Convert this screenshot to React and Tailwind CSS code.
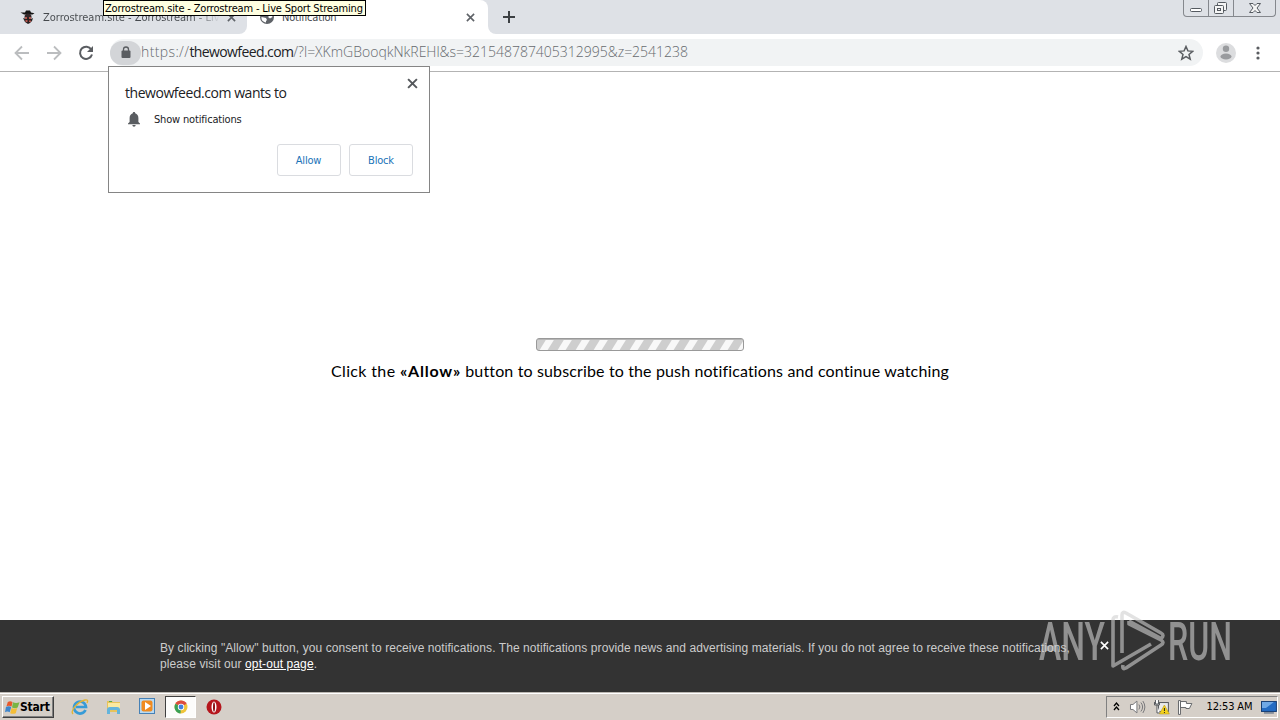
import React from "react";

const TabClose = ({ className }) => (
    <svg viewBox="0 0 10 10" className={className} fill="none" stroke="currentColor" strokeWidth="1.8">
        <path d="M1 1l8 8M9 1L1 9" />
    </svg>
);

function TabStrip() {
    return (
        <div className="flex h-[34px] shrink-0 bg-[#dee1e6] text-[11px] text-[#45494d]">
            <div className="flex w-[247px] bg-white">
                <div className="flex w-full items-center rounded-br-lg bg-[#dee1e6] pl-5">
                    <svg viewBox="0 0 16 16" className="h-4 w-4 shrink-0">
                        <path d="M0.500 3.500l4.500 0L6 1.500h4l1 2 3.500.8-2 1.200L4 5.500z" fill="#151515" />
                        <circle cx="8" cy="8" r="3.500" fill="#33282a" />
                        <path d="M3 9l3 1 2-1 3 1 2-1-1 3-2 2-2 1-3-2-1-2z" fill="#292020" />
                        <path d="M5 8h2v2H5zM9 8h2v2H9zM5.500 11h2v2h-2zM9 11.500h2v1.500H9z" fill="#b5554e" />
                    </svg>
                    <span className="ml-[7px] mt-[2px] w-[177px] overflow-hidden whitespace-nowrap bg-gradient-to-r from-[#45494d] from-85% to-transparent bg-clip-text tracking-[-0.02px] text-transparent">
                        Zorrostream.site - Zorrostream - Live
                    </span>
                    <TabClose className="ml-[7px] h-[9px] w-[9px] text-[#5f6368]" />
                </div>
            </div>
            <div className="flex w-[241px] bg-[#dee1e6]">
                <div className="flex w-full items-center rounded-tr-lg bg-white pl-3">
                    <svg viewBox="0 0 16 16" className="h-4 w-4 shrink-0">
                        <circle cx="8" cy="8" r="7" fill="#5f6368" />
                        <path d="M2.500 8l4.500 1 1 2-1 1v1.500C4 13 2 11 2.500 8zM9 2.500l3 1.500 1.500 4-2.500 1.500-2-1.500 1-1-2-2z" fill="#fff" />
                    </svg>
                    <span className="ml-[7px] mt-[2px] w-[184px] tracking-[-0.2px]">Notification</span>
                    <TabClose className="h-[9px] w-[9px] text-[#5f6368]" />
                </div>
            </div>
            <div className="flex flex-1 bg-white">
                <div className="flex flex-1 items-center justify-between rounded-bl-lg bg-[#dee1e6] pl-[15px] pr-1">
                    <svg viewBox="0 0 12 12" className="h-3 w-3" stroke="#3c4043" strokeWidth="2">
                        <path d="M6 0v12M0 6h12" />
                    </svg>
                    <div className="flex h-[17px] w-[93px] self-start rounded-b-[4px] border border-t-0 border-[#85888d]">
                        <div className="w-[25px] border-r border-[#85888d]">
                            <svg viewBox="0 0 25 16" className="h-4 w-[25px]">
                                <rect x="6.500" y="8.500" width="11" height="3" rx="1" fill="#fff" stroke="#555a60" />
                            </svg>
                        </div>
                        <div className="w-[25px] border-r border-[#85888d]">
                            <svg viewBox="0 0 25 16" className="h-4 w-[25px]" fill="#f5f5f5" stroke="#555a60">
                                <rect x="8.500" y="2.500" width="9" height="8" rx="1" />
                                <rect x="5.500" y="5.500" width="9" height="8" rx="1" />
                                <rect x="8.500" y="8.500" width="3" height="2" />
                            </svg>
                        </div>
                        <svg viewBox="0 0 41 16" className="h-4 w-[41px]">
                            <path
                                d="M15.500 3.500h3.500l2 2 2-2h3.500l-3.500 4.500 3.500 4.500H23l-2-2-2 2h-3.500L19 8z"
                                fill="#f5f5f5"
                                stroke="#555a60"
                            />
                        </svg>
                    </div>
                </div>
            </div>
        </div>
    );
}

function Toolbar() {
    return (
        <div className="flex h-[38px] shrink-0 items-center border-b border-[#b3b3b3] bg-white pl-[14px]">
            <svg viewBox="0 0 16 16" className="h-4 w-4" fill="none" stroke="#bbbdbf" strokeWidth="1.8">
                <path d="M15 8H2M8 1.500L1.500 8 8 14.500" />
            </svg>
            <svg viewBox="0 0 16 16" className="ml-4 h-4 w-4" fill="none" stroke="#bbbdbf" strokeWidth="1.8">
                <path d="M1 8h13M8 1.500L14.500 8 8 14.500" />
            </svg>
            <svg viewBox="0 0 16 16" className="ml-4 h-4 w-4">
                <path d="M13.300 4.500A6.100 6.100 0 1 0 14 9.500" fill="none" stroke="#5a5d61" strokeWidth="2" />
                <path d="M15 1v6H9z" fill="#5a5d61" />
            </svg>
            <div className="ml-[16px] flex h-[27px] w-[1093px] items-center rounded-full bg-[#f1f3f4]">
                <div className="flex h-6 w-[31px] items-center justify-center rounded-full bg-[#d3d5d8]">
                    <svg viewBox="0 0 10 13" className="h-[13px] w-[10px]">
                        <path d="M2.500 6V3.500a2.500 2.500 0 0 1 5 0V6" fill="none" stroke="#5a5d61" strokeWidth="1.300" />
                        <rect x="0.500" y="4.500" width="9" height="7.500" rx="1" fill="#5a5d61" />
                    </svg>
                </div>
                <div className="mb-[2px] flex-1 whitespace-nowrap font-['Open_Sans','Noto_Sans',sans-serif] text-[14px] font-light text-[#666a6e]">
                    <span className="tracking-[0.38px]">https://</span>
                    <span className="tracking-[-0.6px] font-normal text-[#202124]">thewowfeed.com</span>
                    <span className="tracking-[-0.01px]">/?l=XKmGBooqkNkREHl&amp;s=321548787405312995&amp;z=2541238</span>
                </div>
                <svg viewBox="0 0 16 16" className="mr-[9px] h-4 w-4" fill="none" stroke="#5a5d61" strokeWidth="1.500">
                    <path d="M8 1.500l1.900 4.400 4.800.4-3.700 3.100 1.200 4.700L8 11.600l-4.200 2.500L5 9.400 1.300 6.300l4.800-.4z" />
                </svg>
            </div>
            <svg viewBox="0 0 20 20" className="ml-[13px] h-5 w-5">
                <circle cx="10" cy="10" r="10" fill="#dcdddf" />
                <circle cx="10" cy="5.800" r="3.200" fill="#999b9e" />
                <ellipse cx="10" cy="13.500" rx="5.500" ry="3" fill="#999b9e" />
            </svg>
            <svg viewBox="0 0 4 14" className="ml-5 h-[14px] w-1" fill="#5a5d61">
                <circle cx="2" cy="2" r="1.600" />
                <circle cx="2" cy="7" r="1.600" />
                <circle cx="2" cy="12" r="1.600" />
            </svg>
        </div>
    );
}

function PermissionPopup() {
    return (
        <div className="absolute left-[108px] top-[66px] flex h-[127px] w-[322px] flex-col border border-[#858585] bg-white pl-4 pr-4">
            <div className="flex h-[39px] items-end justify-between">
                <p className="mb-[3px] whitespace-nowrap font-['Open_Sans','Noto_Sans',sans-serif] text-[14px] leading-5 tracking-[-0.45px] text-[#202124]">
                    thewowfeed.com wants to
                </p>
                <TabClose className="-mr-[5px] mb-[17px] h-[11px] w-[11px] text-[#55585c]" />
            </div>
            <div className="mt-[5px] flex h-4 items-center">
                <svg viewBox="0 0 12 15" className="ml-[3px] h-[15px] w-3" fill="#5a5d61">
                    <path d="M6 0c.8 0 1.200.5 1.200 1.300C9.200 1.900 10.400 3.500 10.400 6v4L12 11.500v.8H0v-.8L1.600 10V6c0-2.500 1.200-4.100 3.200-4.700C4.800.5 5.200 0 6 0zM4.400 13h3.200c0 1-.6 1.700-1.600 1.700S4.400 14 4.400 13z" />
                </svg>
                <span className="ml-[14px] mt-[2px] text-[11px] tracking-[-0.17px] text-[#202124]">Show notifications</span>
            </div>
            <div className="mt-[17px] flex justify-end gap-2 text-[11px] tracking-[-0.2px] text-[#1a73b8]">
                <button className="h-8 w-16 rounded-[3px] border border-[#dadce0] pr-px pt-[2px]">Allow</button>
                <button className="h-8 w-16 rounded-[3px] border border-[#dadce0] pt-[2px]">Block</button>
            </div>
        </div>
    );
}

function Watermark() {
    return (
        <svg viewBox="0 0 196 66" className="absolute left-[1037px] top-[607px] h-[66px] w-[196px] opacity-60">
            <g fill="#d0d0d0" fontFamily="Roboto, sans-serif" fontSize="53" fontWeight="500">
                <text x="2" y="52.500" textLength="66" lengthAdjust="spacingAndGlyphs">ANY</text>
                <text x="131" y="52.500" textLength="64" lengthAdjust="spacingAndGlyphs">RUN</text>
            </g>
            <path
                d="M81 10q-5-1-5 3v46l38-22M85 46V8q0-4 4-2l35 20q4 2 0 5.500L92 14M92 14v3l32 16q4 2.500 0 5L89 61q-4 2-3-3"
                fill="none"
                stroke="#d0d0d0"
                strokeWidth="3.600"
                strokeLinejoin="round"
            />
        </svg>
    );
}

function Taskbar() {
    return (
        <div className="flex h-[28px] shrink-0 items-center border-t border-[#bdb9b3] bg-[#d5cfc8] pl-[2px] pr-[2px] shadow-[inset_0_1px_0_#fff]">
            <div className="mt-px flex h-[22px] w-[52px] items-center border border-b-[#404040] border-l-white border-r-[#404040] border-t-white pl-[2px] text-[12px] font-bold text-black shadow-[inset_-1px_-1px_0_#808080]">
                <svg viewBox="0 0 16 16" className="h-[15px] w-[15px] shrink-0">
                    <path d="M3 2c2-1 3-1 5 0L7 7C5 6 3 6 1.500 7z" fill="#e9582b" />
                    <path d="M8.500 2.500c2 1 4.500 1 7 0l-2 5.500c-2 1-4 1-6 0z" fill="#79b544" />
                    <path d="M1 7.500c2-1 4-1 5.700 0L5 13c-1.500-1-3.500-1-5 0z" fill="#3f86cc" />
                    <path d="M7 8.500c2 1 4 1 6 0l-1.500 5.500c-2 1-4 1-6 0z" fill="#f4bd36" />
                </svg>
                <span className="tracking-[-0.2px]">Start</span>
            </div>
            <svg viewBox="0 0 18 18" className="ml-[17px] h-[18px] w-[18px]">
                <path d="M14.500 12a6 6 0 1 1 .5-3H5" fill="none" stroke="#369bd7" strokeWidth="2.700" />
                <path d="M2 16C-1 13 6 4 14 2c3-.6 3 1 2 3" fill="none" stroke="#e3b535" strokeWidth="1.400" />
            </svg>
            <svg viewBox="0 0 18 18" className="ml-4 h-[18px] w-[18px]">
                <path d="M2 3h5l1 1h7v10H2z" fill="#e7c35b" />
                <path d="M3 5h12v6H3z" fill="#f9e9a1" />
                <path d="M4 3h3v1H4z" fill="#55a94c" />
                <path d="M2 16v-4c0-2 1-3 3-3h7c2 0 3 1 3 3v4h-3v-4H5v4z" fill="#63b4dc" />
            </svg>
            <svg viewBox="0 0 17 17" className="ml-4 h-[17px] w-[17px]">
                <rect x="0.500" y="0.500" width="15" height="15" fill="#b8daf3" stroke="#4681b6" />
                <rect x="2.500" y="2.500" width="11" height="11" rx="2" fill="#f08b20" />
                <path d="M6 4l6 4-6 4z" fill="#fff" />
            </svg>
            <div className="ml-[9px] flex h-[22px] w-[31px] items-center justify-center border border-b-white border-l-[#404040] border-r-white border-t-[#404040] bg-[#fcfcfb]">
                <svg viewBox="0 0 14 14" className="h-[14px] w-[14px]">
                    <circle cx="7" cy="7" r="6.500" fill="#efc43a" />
                    <path d="M7 7L1.400 3.700A6.500 6.500 0 0 1 12.600 3.700z" fill="#dc4c3f" />
                    <path d="M7 7L1.400 3.700A6.500 6.500 0 0 0 6.500 13.500z" fill="#39a056" />
                    <circle cx="7" cy="7" r="3.200" fill="#fff" />
                    <circle cx="7" cy="7" r="2.400" fill="#4280de" />
                </svg>
            </div>
            <svg viewBox="0 0 16 16" className="ml-[10px] h-4 w-4">
                <circle cx="8" cy="8" r="7.500" fill="#b5161d" />
                <ellipse cx="8" cy="8" rx="2.500" ry="5.500" fill="#fff" />
                <ellipse cx="8" cy="8" rx="1" ry="4.800" fill="#8e1015" />
            </svg>
            <div className="ml-auto flex h-[22px] w-[172px] items-center border border-b-white border-l-[#808080] border-r-white border-t-[#808080] pl-[6px] text-[11px] text-black">
                <svg viewBox="0 0 7 9" className="h-[9px] w-[7px]" fill="none" stroke="#000" strokeWidth="1.300">
                    <path d="M1 4l2.500-3L6 4M1 8l2.500-3L6 8" />
                </svg>
                <svg viewBox="0 0 17 16" className="ml-[9px] h-4 w-[17px]" fill="none" stroke="#77777a">
                    <path d="M1.500 5.500H4L8 2v12l-4-3.500H1.500z" fill="#fff" />
                    <path d="M10 5.500q2 2.500 0 5M12 3.500q3.500 4.500 0 9M14 2q4 6 0 12" />
                </svg>
                <svg viewBox="0 0 17 16" className="ml-[7px] h-4 w-[17px]">
                    <rect x="5.500" y="3.500" width="10" height="9" fill="#e9e9e9" stroke="#55585c" />
                    <path d="M2.500 1v4h3V1M1.500 3v3h5V3M4 6v8h3" fill="#fff" stroke="#55585c" />
                    <path d="M11.500 6l5 9h-10z" fill="#f4d21b" stroke="#bb991c" strokeWidth="0.600" />
                    <path d="M11 9h1v3h-1zM11 13h1v1h-1z" fill="#222" />
                </svg>
                <svg viewBox="0 0 17 16" className="ml-[7px] h-4 w-[17px]" fill="#fff" stroke="#66686b">
                    <path d="M1.500 1.500h2v14h-2zM3.500 2.500h6v2h5.500l-2.500 5H9v-1H3.500z" />
                </svg>
                <span className="ml-[13px] mt-[2px] w-[48px] whitespace-nowrap tracking-[-0.15px]">12:53 AM</span>
                <svg viewBox="0 0 16 14" className="ml-[7px] h-[14px] w-4">
                    <rect x="0.500" y="1.500" width="15" height="10" fill="#236cc3" stroke="#163f75" />
                    <path d="M1 2h12L5 8H1z" fill="#6fa9e6" />
                    <path d="M3 13h10" stroke="#3f5876" />
                </svg>
            </div>
        </div>
    );
}

export default function App() {
    return (
        <div className="relative flex h-[720px] w-[1280px] flex-col overflow-hidden bg-white font-['DejaVu_Sans_Condensed','DejaVu_Sans',sans-serif]">
            <TabStrip />
            <Toolbar />
            <main className="flex flex-1 flex-col items-center pt-[266px]">
                <svg viewBox="0 0 208 13" className="h-[13px] w-[208px]">
                    <defs>
                        <pattern id="stripes" width="18" height="13" patternUnits="userSpaceOnUse">
                            <rect width="18" height="13" fill="#cecece" />
                            <path d="M3 13L11 0h8l-8 13z" fill="#f8f8f8" />
                            <path d="M-15 13l8-13h8l-8 13z" fill="#f8f8f8" />
                        </pattern>
                    </defs>
                    <rect x="0.500" y="0.500" width="207" height="12" rx="2.500" fill="url(#stripes)" stroke="#999" />
                    <path d="M2 1.500h204" stroke="#b5b5b5" />
                </svg>
                <p className="mt-[9px] whitespace-nowrap font-['Lato','Open_Sans',sans-serif] text-[16px] leading-[22px] tracking-[0.14px] text-black">
                    <span className="tracking-[0.35px]">Click the </span>
                    <b className="tracking-[0.8px]">«Allow»</b> button to subscribe to the push notifications and continue watching
                </p>
            </main>
            <footer className="flex h-[72px] shrink-0 bg-[#333] pl-[160px] pt-5 font-['Liberation_Sans',Arial,sans-serif] text-[12px] leading-4 text-[#ccc]">
                <p className="w-[920px] whitespace-nowrap tracking-[0.075px]">
                    By clicking "Allow" button, you consent to receive notifications. The notifications provide news and advertising materials. If you do not agree to receive these notifications,
                    <br />
                    <span className="tracking-[0.1px]">
                        please visit our <a className="text-white underline">opt-out page</a>.
                    </span>
                </p>
                <TabClose className="ml-5 mt-[1px] h-[9px] w-[9px] text-white" />
            </footer>
            <Taskbar />
            <div className="absolute left-[103px] top-0 h-4 w-[263px] whitespace-nowrap border border-black bg-[#ffffe1] pl-px text-[11px] leading-[15px] tracking-[-0.18px] text-black">
                Zorrostream.site - Zorrostream - Live Sport Streaming
            </div>
            <PermissionPopup />
            <Watermark />
        </div>
    );
}
